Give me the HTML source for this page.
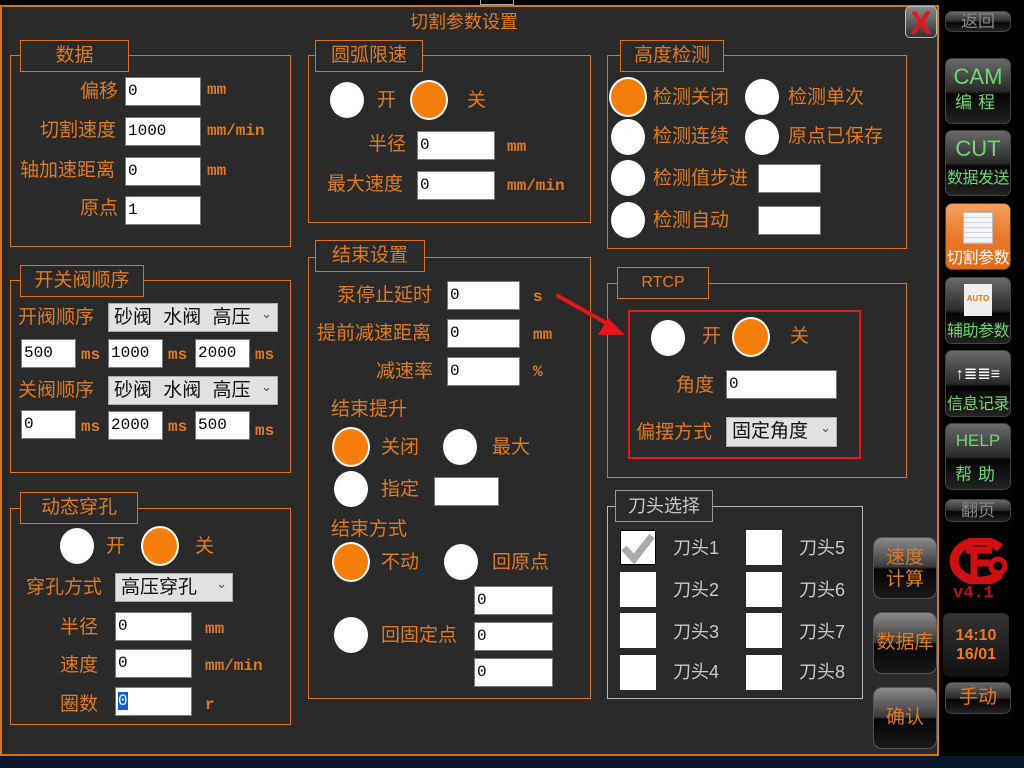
<!DOCTYPE html>
<html><head><meta charset="utf-8"><style>
*{margin:0;padding:0;box-sizing:border-box}
body{width:1024px;height:768px;background:#000;position:relative;overflow:hidden;font-family:"Liberation Sans","Noto Sans CJK SC",sans-serif;}
.a{position:absolute}
#panel{left:0;top:5px;width:939px;height:751px;background:#2a2a2a;border:2px solid #d9731a;}
.t{position:absolute;color:#e07a1f;font-size:19px;line-height:20px;white-space:nowrap}
.g{color:#c8c8c8;font-size:18px}
.u{position:absolute;color:#e07a1f;font-family:"Liberation Mono",monospace;font-weight:bold;font-size:16px;line-height:20px}
.f{position:absolute;border:1px solid #d9731a}
.lg{position:absolute;border:1px solid #d9731a;background:#2a2a2a;color:#e07a1f;font-size:19px;text-align:center}
.in{position:absolute;background:#fff;border:1px solid #777;font-family:"Liberation Mono",monospace;font-size:16px;color:#000;padding-left:2px;line-height:26px}
.sel{position:absolute;background:#e1e1e1;border:1px solid #aaa;font-size:19px;color:#111;padding-left:5px;line-height:27px;white-space:nowrap;word-spacing:6px}
.sel:after{content:"⌄";position:absolute;right:5px;top:-4px;font-size:13px;color:#555}
.rw{position:absolute;width:34px;height:36px;border-radius:50%;background:#fff}
.ro{position:absolute;width:34px;height:36px;border-radius:50%;background:#f57f0a;box-shadow:0 0 0 2px #fff}
.cb{position:absolute;width:36px;height:35px;background:#fff}
.btn{position:absolute;left:873px;width:64px;height:62px;border-radius:9px;background:linear-gradient(#8a8a8a,#3a3a3a 48%,#050505 52%,#1a1a1a);color:#e07a1f;font-size:19px;text-align:center;line-height:22px;border:1px solid #555}
.sb{position:absolute;left:945px;width:66px;border-radius:7px;background:linear-gradient(#6a6a6a,#2a2a2a 50%,#050505 55%,#222);color:#6ed86e;text-align:center;border:1px solid #444;white-space:nowrap;overflow:hidden}
.sl{font-size:16px;line-height:20px;letter-spacing:-0.5px}
</style></head><body>
<div class="a" style="left:0;top:756px;width:1024px;height:12px;background:#08182a"></div>
<div class="a" style="left:480px;top:0;width:34px;height:5px;border:1px solid #aaa;border-top:none"></div>
<div class="a" id="panel"></div>
<div class="t" style="left:410px;top:12px;font-size:18px">切割参数设置</div>
<div class="a" style="left:905px;top:6px;width:32px;height:32px;border-radius:5px;background:linear-gradient(#888,#333);border:1px solid #bbb"><div style="color:#e8141a;font-size:32px;font-weight:bold;line-height:32px;text-align:center;font-family:'Liberation Sans'">X</div></div>

<div class="f" style="left:10px;top:55px;width:281px;height:192px"></div>
<div class="lg" style="left:20px;top:40px;width:109px;height:32px;line-height:30px">数据</div>
<div class="t" style="left:80px;top:82px">偏移</div><div class="in" style="left:125px;top:77px;width:76px;height:29px">0</div><div class="u" style="left:207px;top:80px">mm</div>
<div class="t" style="left:40px;top:121px">切割速度</div><div class="in" style="left:125px;top:117px;width:76px;height:29px">1000</div><div class="u" style="left:207px;top:121px">mm/min</div>
<div class="t" style="left:20px;top:161px">轴加速距离</div><div class="in" style="left:125px;top:157px;width:76px;height:29px">0</div><div class="u" style="left:207px;top:161px">mm</div>
<div class="t" style="left:80px;top:199px">原点</div><div class="in" style="left:125px;top:196px;width:76px;height:29px">1</div>

<div class="f" style="left:10px;top:280px;width:281px;height:193px"></div>
<div class="lg" style="left:20px;top:265px;width:124px;height:32px;line-height:30px">开关阀顺序</div>
<div class="t" style="left:18px;top:308px">开阀顺序</div><div class="sel" style="left:108px;top:303px;width:170px;height:29px">砂阀 水阀 高压</div>
<div class="in" style="left:21px;top:339px;width:55px;height:29px">500</div><div class="u" style="left:81px;top:345px">ms</div>
<div class="in" style="left:108px;top:339px;width:55px;height:29px">1000</div><div class="u" style="left:168px;top:345px">ms</div>
<div class="in" style="left:195px;top:339px;width:55px;height:29px">2000</div><div class="u" style="left:255px;top:345px">ms</div>
<div class="t" style="left:18px;top:381px">关阀顺序</div><div class="sel" style="left:108px;top:376px;width:170px;height:29px">砂阀 水阀 高压</div>
<div class="in" style="left:21px;top:410px;width:55px;height:29px">0</div><div class="u" style="left:81px;top:417px">ms</div>
<div class="in" style="left:108px;top:411px;width:55px;height:29px">2000</div><div class="u" style="left:168px;top:417px">ms</div>
<div class="in" style="left:195px;top:411px;width:55px;height:29px">500</div><div class="u" style="left:255px;top:421px">ms</div>

<div class="f" style="left:10px;top:508px;width:281px;height:217px"></div>
<div class="lg" style="left:20px;top:492px;width:118px;height:32px;line-height:30px">动态穿孔</div>
<div class="rw" style="left:60px;top:528px"></div><div class="t" style="left:106px;top:537px">开</div>
<div class="ro" style="left:143px;top:528px"></div><div class="t" style="left:195px;top:537px">关</div>
<div class="t" style="left:26px;top:578px">穿孔方式</div><div class="sel" style="left:115px;top:573px;width:118px;height:29px">高压穿孔</div>
<div class="t" style="left:60px;top:618px">半径</div><div class="in" style="left:115px;top:612px;width:77px;height:29px">0</div><div class="u" style="left:205px;top:619px">mm</div>
<div class="t" style="left:60px;top:656px">速度</div><div class="in" style="left:115px;top:649px;width:77px;height:29px">0</div><div class="u" style="left:205px;top:656px">mm/min</div>
<div class="t" style="left:60px;top:695px">圈数</div><div class="in" style="left:115px;top:687px;width:77px;height:29px"><span style="background:#1060d0;color:#fff">0</span></div><div class="u" style="left:205px;top:695px">r</div>

<div class="f" style="left:308px;top:55px;width:283px;height:168px"></div>
<div class="lg" style="left:315px;top:40px;width:108px;height:32px;line-height:30px">圆弧限速</div>
<div class="rw" style="left:330px;top:82px"></div><div class="t" style="left:377px;top:91px">开</div>
<div class="ro" style="left:412px;top:82px"></div><div class="t" style="left:467px;top:91px">关</div>
<div class="t" style="left:368px;top:135px">半径</div><div class="in" style="left:417px;top:131px;width:78px;height:29px">0</div><div class="u" style="left:507px;top:137px">mm</div>
<div class="t" style="left:327px;top:175px">最大速度</div><div class="in" style="left:417px;top:171px;width:78px;height:29px">0</div><div class="u" style="left:507px;top:176px">mm/min</div>

<div class="f" style="left:308px;top:257px;width:283px;height:442px"></div>
<div class="lg" style="left:315px;top:240px;width:110px;height:32px;line-height:30px">结束设置</div>
<div class="t" style="left:337px;top:286px">泵停止延时</div><div class="in" style="left:447px;top:281px;width:73px;height:29px">0</div><div class="u" style="left:533px;top:287px">s</div>
<div class="t" style="left:317px;top:324px">提前减速距离</div><div class="in" style="left:447px;top:319px;width:73px;height:29px">0</div><div class="u" style="left:533px;top:325px">mm</div>
<div class="t" style="left:376px;top:362px">减速率</div><div class="in" style="left:447px;top:357px;width:73px;height:29px">0</div><div class="u" style="left:533px;top:362px">%</div>
<div class="t" style="left:331px;top:400px">结束提升</div>
<div class="ro" style="left:334px;top:429px"></div><div class="t" style="left:381px;top:438px">关闭</div>
<div class="rw" style="left:443px;top:429px"></div><div class="t" style="left:492px;top:438px">最大</div>
<div class="rw" style="left:334px;top:471px"></div><div class="t" style="left:381px;top:480px">指定</div>
<div class="in" style="left:434px;top:477px;width:65px;height:29px"></div>
<div class="t" style="left:331px;top:520px">结束方式</div>
<div class="ro" style="left:334px;top:544px"></div><div class="t" style="left:381px;top:553px">不动</div>
<div class="rw" style="left:444px;top:544px"></div><div class="t" style="left:492px;top:553px">回原点</div>
<div class="in" style="left:474px;top:586px;width:79px;height:29px">0</div>
<div class="in" style="left:474px;top:622px;width:79px;height:29px">0</div>
<div class="in" style="left:474px;top:658px;width:79px;height:29px">0</div>
<div class="rw" style="left:334px;top:617px"></div><div class="t" style="left:381px;top:626px">回固定点</div>

<div class="f" style="left:607px;top:55px;width:300px;height:194px"></div>
<div class="lg" style="left:620px;top:40px;width:104px;height:32px;line-height:30px">高度检测</div>
<div class="ro" style="left:611px;top:79px"></div><div class="t" style="left:653px;top:88px">检测关闭</div>
<div class="rw" style="left:745px;top:79px"></div><div class="t" style="left:788px;top:88px">检测单次</div>
<div class="rw" style="left:611px;top:119px"></div><div class="t" style="left:653px;top:127px">检测连续</div>
<div class="rw" style="left:745px;top:119px"></div><div class="t" style="left:788px;top:127px">原点已保存</div>
<div class="rw" style="left:611px;top:160px"></div><div class="t" style="left:653px;top:169px">检测值步进</div>
<div class="in" style="left:758px;top:164px;width:63px;height:29px"></div>
<div class="rw" style="left:611px;top:202px"></div><div class="t" style="left:653px;top:211px">检测自动</div>
<div class="in" style="left:758px;top:206px;width:63px;height:29px"></div>

<div class="f" style="left:607px;top:283px;width:300px;height:195px"></div>
<div class="lg" style="left:617px;top:267px;width:92px;height:32px;line-height:30px;font-size:16px">RTCP</div>
<div class="a" style="left:628px;top:310px;width:233px;height:149px;border:2px solid #e8141a"></div>
<div class="rw" style="left:651px;top:320px"></div><div class="t" style="left:702px;top:327px">开</div>
<div class="ro" style="left:734px;top:319px"></div><div class="t" style="left:790px;top:327px">关</div>
<div class="t" style="left:676px;top:376px">角度</div><div class="in" style="left:726px;top:370px;width:111px;height:29px">0</div>
<div class="t" style="left:636px;top:423px">偏摆方式</div><div class="sel" style="left:726px;top:417px;width:111px;height:30px">固定角度</div>
<svg class="a" style="left:550px;top:285px" width="90" height="65"><line x1="8" y1="11" x2="60" y2="40" stroke="#e8141a" stroke-width="4" stroke-linecap="round"/><polygon points="75,50 48,50 58,33" fill="#e8141a"/></svg>

<div class="a" style="left:607px;top:506px;width:256px;height:193px;border:1px solid #bbb"></div>
<div class="a" style="left:615px;top:490px;width:98px;height:32px;border:1px solid #999;background:#2a2a2a;color:#c8c8c8;font-size:18px;text-align:center;line-height:30px">刀头选择</div>
<div class="cb" style="left:620px;top:530px;border:1px solid #000"><svg width="34" height="33"><path d="M3 17 L13 28 L31 5" stroke="#aaa" stroke-width="7" fill="none"/></svg></div>
<div class="cb" style="left:620px;top:572px"></div><div class="cb" style="left:620px;top:613px"></div><div class="cb" style="left:620px;top:655px"></div>
<div class="cb" style="left:746px;top:530px"></div><div class="cb" style="left:746px;top:572px"></div><div class="cb" style="left:746px;top:613px"></div><div class="cb" style="left:746px;top:655px"></div>
<div class="t g" style="left:673px;top:538px">刀头1</div><div class="t g" style="left:673px;top:580px">刀头2</div><div class="t g" style="left:673px;top:622px">刀头3</div><div class="t g" style="left:673px;top:662px">刀头4</div>
<div class="t g" style="left:799px;top:538px">刀头5</div><div class="t g" style="left:799px;top:580px">刀头6</div><div class="t g" style="left:799px;top:622px">刀头7</div><div class="t g" style="left:799px;top:662px">刀头8</div>

<div class="btn" style="top:537px;padding-top:9px">速度<br>计算</div>
<div class="btn" style="top:612px;line-height:60px">数据库</div>
<div class="btn" style="top:687px;line-height:60px">确认</div>

<div class="sb" style="top:11px;height:21px;color:#888;font-size:17px;line-height:20px">返回</div>
<div class="sb" style="top:58px;height:66px"><div style="font-size:22px;line-height:32px;margin-top:2px">CAM</div><div class="sl" style="font-size:17px;letter-spacing:6px">编程</div></div>
<div class="sb" style="top:130px;height:66px"><div style="font-size:22px;line-height:32px;margin-top:2px">CUT</div><div class="sl" style="margin-top:4px">数据发送</div></div>
<div class="sb" style="top:203px;height:67px;background:linear-gradient(#f8a060,#e8782a 50%,#e06a1a);color:#fff"><div style="margin:8px auto 5px;width:30px;height:32px;background:#f4f4f4;border:1px solid #bbb;background-image:repeating-linear-gradient(#f4f4f4 0 4px,#c8d8e8 4px 5px)"></div><div class="sl">切割参数</div></div>
<div class="sb" style="top:277px;height:67px"><div style="margin:6px auto 6px;width:28px;height:32px;background:#eee;color:#e07a1f;font-size:8px;line-height:30px;font-weight:bold">AUTO</div><div class="sl">辅助参数</div></div>
<div class="sb" style="top:350px;height:67px"><div style="margin:10px auto 6px;width:48px;height:28px;color:#fff;font-size:16px;line-height:28px">↑≣≣≡</div><div class="sl">信息记录</div></div>
<div class="sb" style="top:423px;height:67px"><div style="font-size:17px;line-height:30px;margin-top:2px">HELP</div><div style="font-size:17px;letter-spacing:6px;margin-top:4px">帮助</div></div>
<div class="sb" style="top:499px;height:23px;color:#888;font-size:17px;line-height:21px">翻页</div>
<svg class="a" style="left:948px;top:538px" width="62" height="46"><path d="M52 10 A26 20 0 1 0 52 36" fill="none" stroke="#d01010" stroke-width="9"/><path d="M18 12 H44 M26 12 V40 M26 25 H42" stroke="#d01010" stroke-width="7" fill="none"/><circle cx="50" cy="28" r="7" fill="none" stroke="#d01010" stroke-width="5"/></svg>
<div class="a" style="left:953px;top:584px;color:#c01010;font-weight:bold;font-size:17px;font-family:'Liberation Mono',monospace">v4.1</div>
<div class="a" style="left:943px;top:613px;width:66px;height:64px;border-radius:6px;background:linear-gradient(#333,#111);color:#f07a1a;font-weight:bold;font-size:16px;text-align:center;line-height:19px;padding-top:13px">14:10<br>16/01</div>
<div class="sb" style="top:682px;height:32px;color:#f07a1a;font-size:19px;line-height:30px">手动</div>
</body></html>
